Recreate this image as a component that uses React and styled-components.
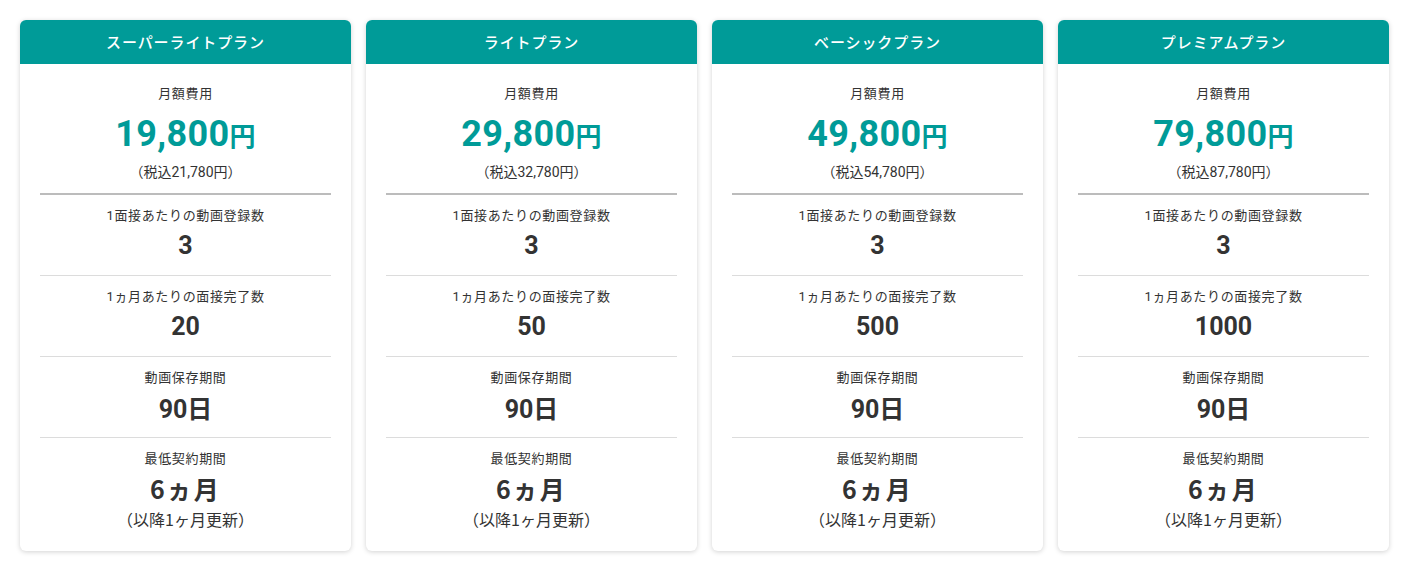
import React from "react";
import styled, { createGlobalStyle } from "styled-components";

const GlobalStyle = createGlobalStyle`
  html, body { margin: 0; padding: 0; background: #ffffff; }
  body {
    font-family: Roboto, "Noto Sans CJK JP", sans-serif;
    color: #333333;
  }
  * { box-sizing: border-box; }
`;

const Page = styled.div`
  display: grid;
  grid-template-columns: repeat(4, 1fr);
  gap: 15px;
  padding: 20px 21px 20px 20px;
`;

const Card = styled.section`
  background: #ffffff;
  border-radius: 6px;
  box-shadow: 0 1px 5px rgba(0, 0, 0, 0.18);
  overflow: hidden;
  display: flex;
  flex-direction: column;
`;

const Header = styled.h2`
  margin: 0;
  height: 44px;
  padding-bottom: 2px;
  background: #009b98;
  color: #ffffff;
  display: flex;
  align-items: center;
  justify-content: center;
  font-size: 15px;
  font-weight: 500;
  letter-spacing: 0.06em;
  font-family: "Noto Sans CJK JP", sans-serif;
`;

const Body = styled.div`
  padding: 0 20px 21px;
  display: flex;
  flex-direction: column;
`;

const PriceBlock = styled.div`
  padding: 18px 0 13px;
  border-bottom: 2px solid #bcbcbc;
`;

const Line = styled.div`
  display: flex;
  align-items: center;
  justify-content: center;
  white-space: nowrap;
`;

const Label = styled(Line)`
  height: 20px;
  font-size: 13px;
  letter-spacing: 0.05em;
  color: #333;
`;

const Price = styled(Line)`
  margin-top: 10px;
  height: 44px;
  align-items: baseline;
  color: #009b98;
  font-weight: 700;
  font-size: 36px;
  line-height: 44px;
  letter-spacing: 0.01em;
`;

const Yen = styled.span`
  font-size: 26px;
  font-family: "Noto Sans CJK JP", sans-serif;
  font-weight: 700;
`;

const Tax = styled(Line)`
  margin-top: 6px;
  height: 18px;
  font-size: 14px;
  color: #333;
`;

const Row = styled.div`
  padding: ${(p) => (p.$last ? "9px 0 0" : "9px 0 14px")};
  border-bottom: ${(p) => (p.$last ? "none" : "1px solid #dcdcdc")};
`;

const Value = styled(Line)`
  margin-top: 5px;
  height: 32px;
  font-size: 25px;
  font-weight: 700;
  color: #333;
  letter-spacing: ${(p) => (p.$spaced ? "0.08em" : "0")};
  font-family: ${(p) =>
    p.$cjk ? `"Noto Sans CJK JP", sans-serif` : `Roboto, "Noto Sans CJK JP", sans-serif`};
`;

const Note = styled(Line)`
  margin-top: 4px;
  height: 22px;
  font-size: 16px;
  color: #333;
  font-family: "Noto Sans CJK JP", sans-serif;
`;

const plans = [
  { name: "スーパーライトプラン", price: "19,800", tax: "21,780", interviews: "20" },
  { name: "ライトプラン", price: "29,800", tax: "32,780", interviews: "50" },
  { name: "ベーシックプラン", price: "49,800", tax: "54,780", interviews: "500" },
  { name: "プレミアムプラン", price: "79,800", tax: "87,780", interviews: "1000" },
];

function PlanCard({ plan }) {
  return (
    <Card>
      <Header>{plan.name}</Header>
      <Body>
        <PriceBlock>
          <Label>月額費用</Label>
          <Price>
            {plan.price}
            <Yen>円</Yen>
          </Price>
          <Tax>（税込{plan.tax}円）</Tax>
        </PriceBlock>
        <Row>
          <Label>1面接あたりの動画登録数</Label>
          <Value>3</Value>
        </Row>
        <Row>
          <Label>1ヵ月あたりの面接完了数</Label>
          <Value>{plan.interviews}</Value>
        </Row>
        <Row>
          <Label>動画保存期間</Label>
          <Value>90日</Value>
        </Row>
        <Row $last>
          <Label>最低契約期間</Label>
          <Value $cjk $spaced>6ヵ月</Value>
          <Note>（以降1ヶ月更新）</Note>
        </Row>
      </Body>
    </Card>
  );
}

export default function App() {
  return (
    <>
      <GlobalStyle />
      <Page>
        {plans.map((p) => (
          <PlanCard key={p.name} plan={p} />
        ))}
      </Page>
    </>
  );
}
